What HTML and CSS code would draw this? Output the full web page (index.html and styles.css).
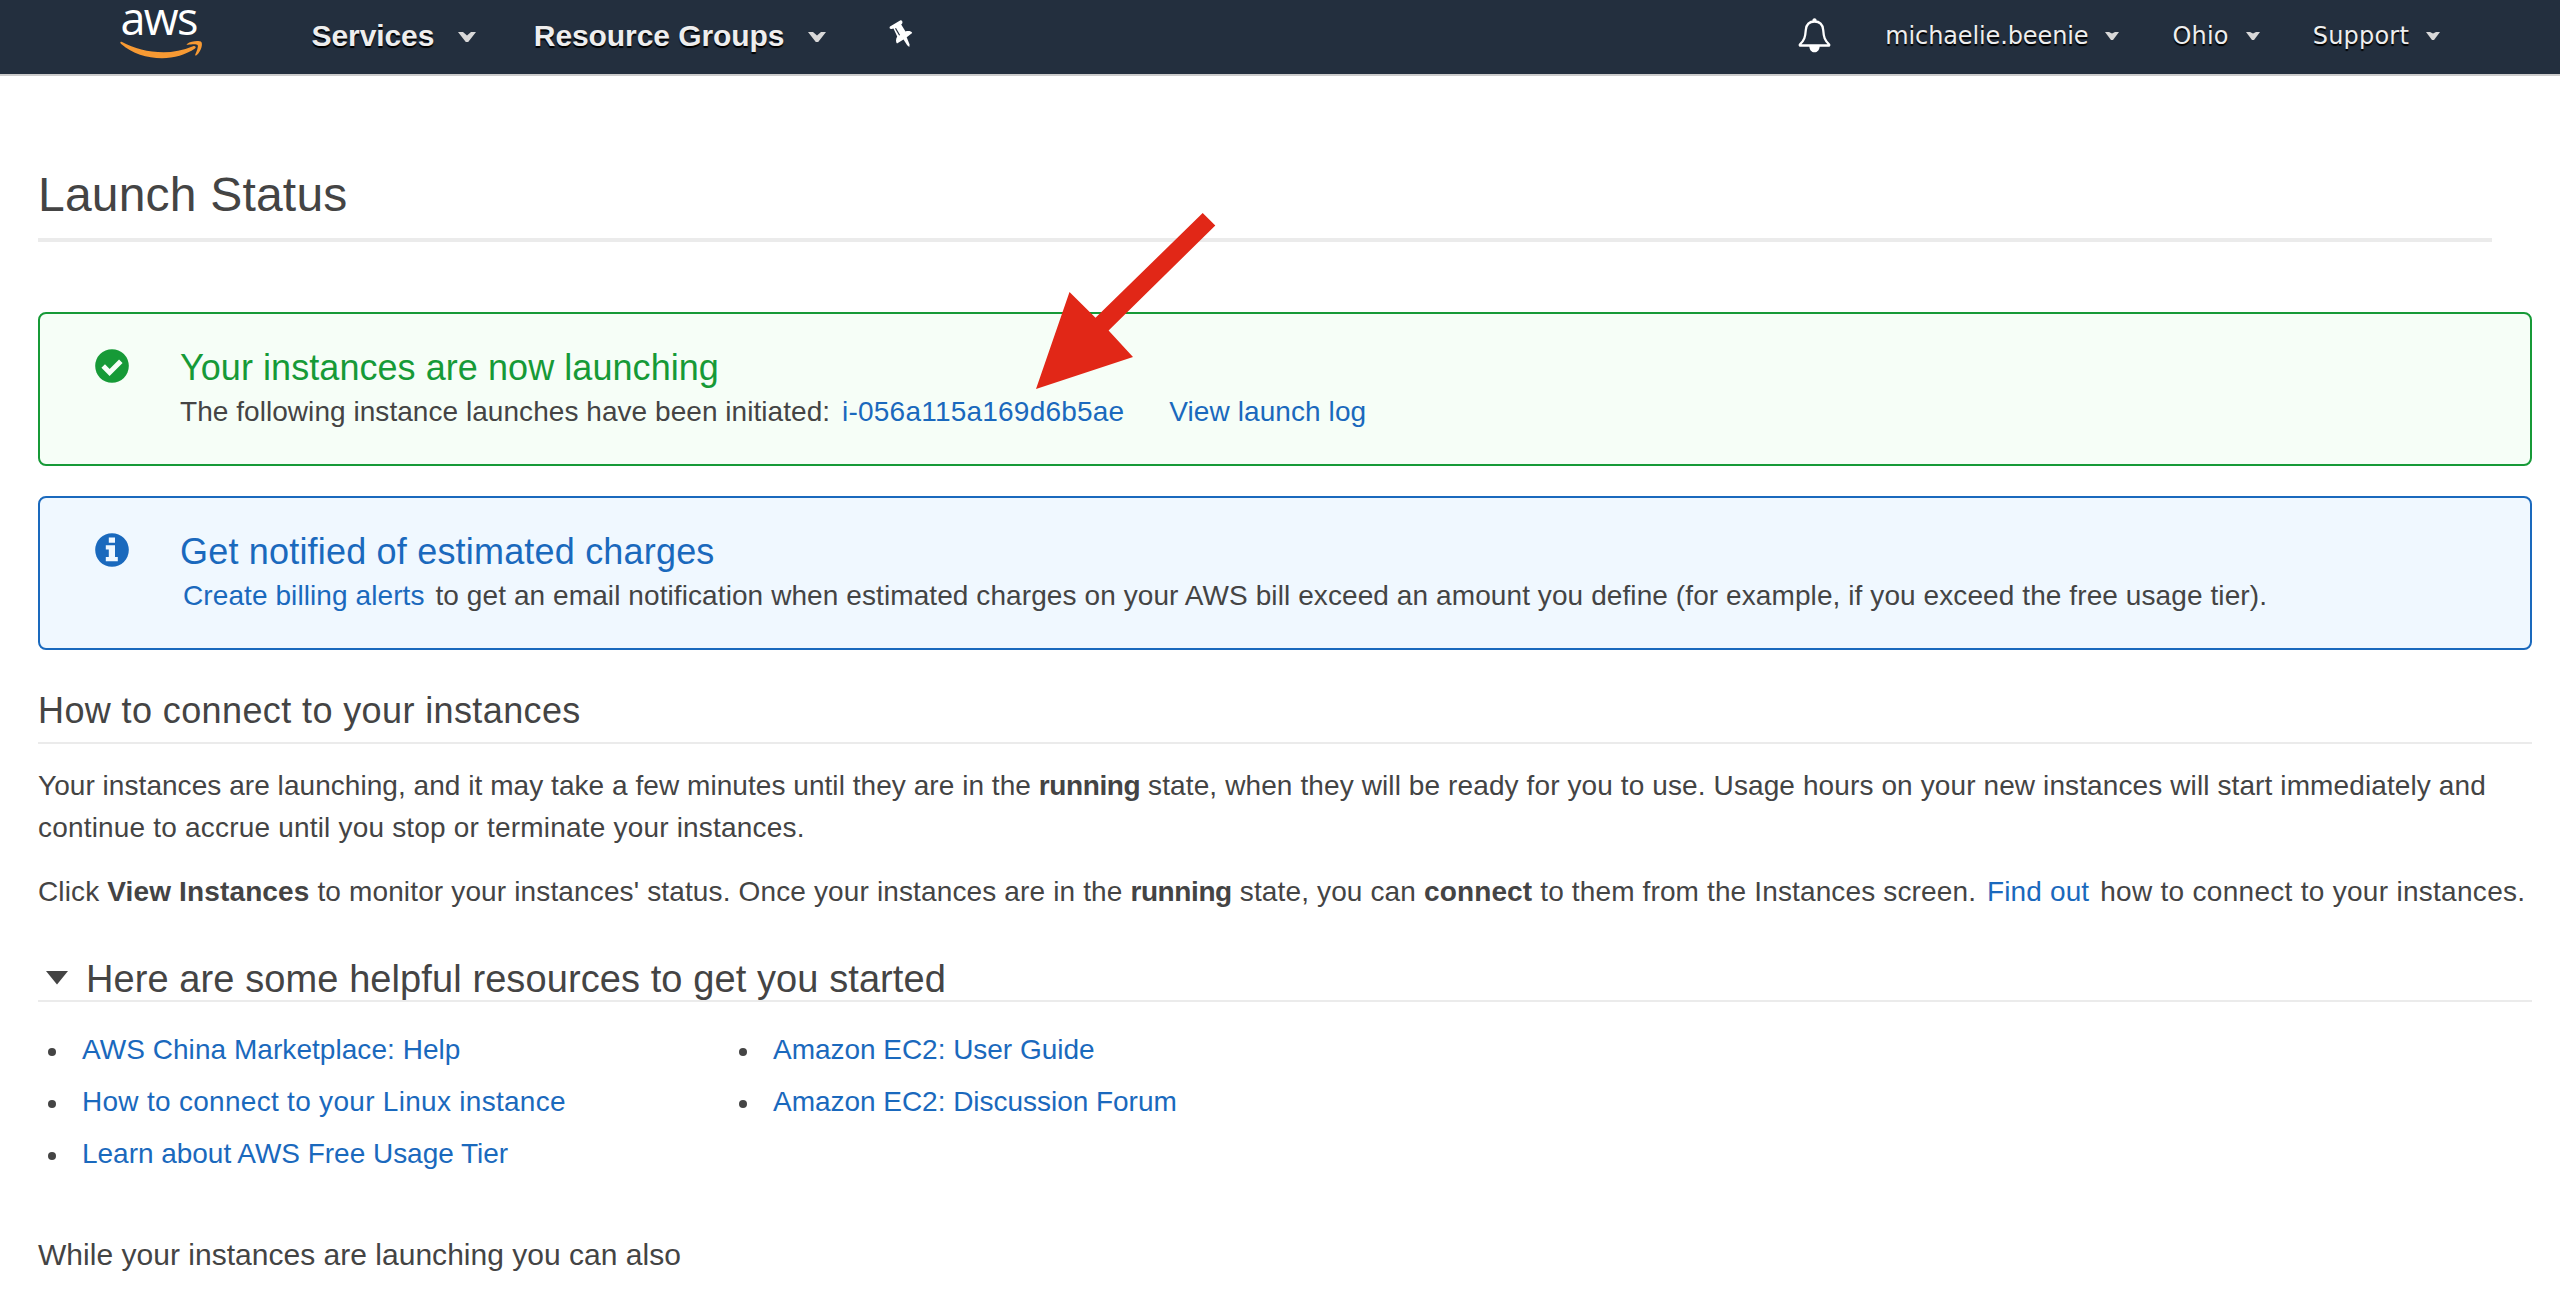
FILE: index.html
```
<!DOCTYPE html>
<html lang="en">
<head>
<meta charset="utf-8">
<title>Launch Status</title>
<link rel="stylesheet" href="styles.css">
</head>
<body>
<header class="nav">
  <svg class="logo" width="83" height="74" viewBox="0 0 83 74"><text class="logo-text" x="0.500" y="35">aws</text><g transform="translate(0 41)" fill="#f79a33"><path d="M0.500 1C0 1.700 0.600 2.500 1.500 3.300C12 12.500 27 17.300 42 17.300C54 17.300 66 13.500 75 7.500C76.700 6.300 75.200 4.300 73 5.200C63 9.300 53 11.300 43.500 11.300C28 11.300 14 7.500 2 1C1.400 0.600 0.900 0.500 0.500 1Z"/><path d="M67 2.900C71 0 78.500-0.600 81 0.700C83.300 2.200 81.200 10.500 76.500 14.200C75.600 15 74.800 14.600 75.300 13.500C76.600 10.500 78.600 5.400 77.600 4C76.500 2.700 71 3.400 68 3.700C66.600 3.900 66.300 3.400 67 2.900Z"/></g></svg>
  <a class="menu menu-main">Services<svg class="caret" width="18" height="10" viewBox="0 0 18 10"><path d="M0 0H5L9 3.500L13 0H18L10.200 10H7.800Z"/></svg></a>
  <a class="menu menu-main">Resource Groups<svg class="caret" width="18" height="10" viewBox="0 0 18 10"><path d="M0 0H5L9 3.500L13 0H18L10.200 10H7.800Z"/></svg></a>
  <svg class="pin" width="24" height="28" viewBox="0 0 24 28"><path fill="#fff" d="M1 6.500L11.500 0.200C13 0 14 2 13.200 3.500L12.200 4.500L16.500 11.500C19 10.500 22.500 11 23.200 13L17.700 17.200L20.600 24.500L20.300 27L18.200 25.200L14.500 19.500L8 23.600C6.700 22 6.600 19.500 8.200 16.600L4.500 8.600L2.500 9C0.800 9.200 0 7.700 1 6.500Z"/><path d="M6.500 8.200L10.600 15.200" stroke="#232f3e" stroke-width="1.200"/></svg>
  <div class="nav-right">
    <svg class="bell" width="33" height="35" viewBox="0 0 33 35"><path d="M16.500 3.500C10.500 3.500 8.200 7.500 7.800 12C7.300 19 6.300 22.500 1.800 26.500V27.500H31.200V26.500C26.700 22.500 25.700 19 25.200 12C24.800 7.500 22.500 3.500 16.500 3.500Z" fill="none" stroke="#fff" stroke-width="2.300" stroke-linejoin="round"/><path d="M14.500 3.500V1.500Q16.500-0.800 18.500 1.500V3.500ZM11.300 28H21.700C21.500 32 19.500 34.300 16.500 34.300C13.500 34.300 11.500 32 11.300 28Z" fill="#fff"/></svg>
    <a class="menu user">michaelie.beenie<svg class="caret" width="14" height="8" viewBox="0 0 14 8"><path d="M0 0H4L7 1.500L10 0H14L8 8H6Z"/></svg></a>
    <a class="menu">Ohio<svg class="caret" width="14" height="8" viewBox="0 0 14 8"><path d="M0 0H4L7 1.500L10 0H14L8 8H6Z"/></svg></a>
    <a class="menu">Support<svg class="caret" width="14" height="8" viewBox="0 0 14 8"><path d="M0 0H4L7 1.500L10 0H14L8 8H6Z"/></svg></a>
  </div>
</header>
<main>
  <h1>Launch Status</h1>
  <section class="alert success">
    <svg class="alert-icon" width="34" height="34" viewBox="0 0 34 34"><circle cx="17" cy="17" r="16.800" fill="#169a37"/><path d="M8.200 17L14.600 23.500L25.800 12.300" fill="none" stroke="#f6fef7" stroke-width="5"/></svg>
    <div>
      <h3>Your instances are now launching</h3>
      <p><span class="snug">The following instance launches have been initiated:</span> <a class="instance">i-056a115a169d6b5ae</a> <a class="log">View launch log</a></p>
    </div>
  </section>
  <section class="alert info">
    <svg class="alert-icon" width="34" height="34" viewBox="0 0 34 34"><circle cx="17" cy="17" r="16.800" fill="#1a69bd"/><path d="M13.800 4.500H20V9.800H13.800ZM10.800 12.300H20V24H22.800V28.300H10.800V24H13.800V16.600H10.800Z" fill="#f0f8ff"/></svg>
    <div>
      <h3>Get notified of estimated charges</h3>
      <p><a class="inline-link">Create billing alerts</a> to get an email notification when estimated charges on your AWS bill exceed an amount you define (for example, if you exceed the free usage tier).</p>
    </div>
  </section>
  <h2>How to connect to your instances</h2>
  <p class="body-text"><span class="snug">Your instances are launching, and it may take a few minutes until they are in the</span> <b class="state">running</b> <span class="wide">state, when they will be ready for you to use. Usage hours on your new instances will start immediately and</span><br><span class="wider">continue to accrue until you stop or terminate your instances.</span></p>
  <p class="body-text second">Click <b>View Instances</b> to monitor your instances' status. Once your instances are in the <b class="state">running</b> state, you can <b>connect</b> to them from the Instances screen. <a class="inline-link">Find out</a> <span class="widest">how to connect to your instances.</span></p>
  <h2 class="resources"><svg width="22" height="14" viewBox="0 0 22 14"><path d="M0 0H22L11 13.500Z" fill="#444"/></svg>Here are some helpful resources to get you started</h2>
  <div class="lists">
    <ul>
      <li><a class="snug">AWS China Marketplace: Help</a></li>
      <li><a class="widest">How to connect to your Linux instance</a></li>
      <li><a class="tight">Learn about AWS Free Usage Tier</a></li>
    </ul>
    <ul>
      <li><a class="tight">Amazon EC2: User Guide</a></li>
      <li><a class="tight">Amazon EC2: Discussion Forum</a></li>
    </ul>
  </div>
  <p class="also">While your instances are launching you can also</p>
</main>
<svg class="pointer" width="180" height="176" viewBox="0 0 180 176"><path d="M166.700 0L179.300 12.500L72.600 117.500L97 144L0 176L33.500 79L59.500 104.800Z" fill="#e12717"/></svg>
</body>
</html>
```
FILE: styles.css
```
* { box-sizing: border-box; }
body {
  margin: 0;
  height: 1310px;
  overflow: hidden;
  position: relative;
  background: #fff;
  color: #444;
  font: 28px/42px "Liberation Sans", Arial, sans-serif;
  letter-spacing: 0.090px;
}
h1, h2, h3, p, ul { margin: 0; padding: 0; font-weight: 400; }
a { color: #1a69bd; }

.nav {
  display: flex;
  height: 76px;
  padding-left: 120px;
  background: #232f3e;
  border-bottom: 2px solid #ccc;
}
.logo { margin-right: 108.500px; overflow: visible; }
.logo-text {
  fill: #fff;
  font: 500 45px "Open Sans", "Noto Sans", sans-serif;
  letter-spacing: -1.700px;
}
.menu {
  display: flex;
  color: #eee;
  font: 24px/73px "DejaVu Sans", Verdana, sans-serif;
  letter-spacing: 0.200px;
  text-shadow: 0 2px 1px #000;
}
.user { letter-spacing: -0.120px; }
.menu-main {
  font: 700 30px/71px "Liberation Sans", Arial, sans-serif;
  letter-spacing: -0.080px;
  margin-right: 57.500px;
}
.caret { margin: 32px 0 0 17px; fill: #d8d8d8; }
.menu-main .caret { margin-left: 24px; }
.pin { margin: 20px 0 0 5px; }
.nav-right { display: flex; margin-left: auto; padding-right: 120px; gap: 53px; }
.bell { margin: 18px 1px 0 0; }

main { padding: 91px 28px 0 38px; }
h1 {
  width: 2454px;
  padding-bottom: 15px;
  border-bottom: 4px solid #ebebeb;
  font-size: 48px;
  line-height: 56px;
  letter-spacing: 0.200px;
  margin-bottom: 70px;
}
.alert {
  display: flex;
  gap: 51px;
  height: 154px;
  padding: 32px 0 0 55px;
  border: 2px solid;
  border-radius: 8px;
}
.alert + .alert { margin-top: 30px; }
.alert-icon { margin-top: 3px; }
.success { border-color: #169a37; background: #f6fef7; }
.info { border-color: #1a69bd; background: #f0f8ff; }
h3 { font-size: 36px; line-height: 44px; margin-bottom: 1px; }
.success h3 { color: #169a37; letter-spacing: 0.060px; }
.info h3 { color: #1a69bd; letter-spacing: 0.190px; }

.instance { margin-left: 4px; letter-spacing: 0.220px; }
.log { margin-left: 37px; }
.inline-link { margin: 0 3px; }
.state { letter-spacing: -0.400px; }
.tight { letter-spacing: -0.030px; }
.snug { letter-spacing: 0.050px; }
.wide { letter-spacing: 0.110px; }
.wider { letter-spacing: 0.190px; }
.widest { letter-spacing: 0.290px; }

h2 {
  margin-top: 39px;
  padding-bottom: 9px;
  border-bottom: 2px solid #ebebeb;
  font-size: 36px;
  line-height: 44px;
  letter-spacing: 0.390px;
}
.body-text { margin-top: 21px; white-space: nowrap; }
.second { margin-top: 22px; letter-spacing: 0.140px; }
.resources {
  display: flex;
  gap: 18px;
  margin-top: 45px;
  padding: 0 0 0 8px;
  font-size: 38px;
  line-height: 42px;
  letter-spacing: 0.090px;
}
.resources svg { margin-top: 13px; }
.lists { display: flex; margin-top: 22px; height: 156px; }
ul { width: 691px; list-style: none; }
li { display: flex; align-items: center; height: 52px; }
li::before {
  content: "";
  width: 8px;
  height: 8px;
  margin: 3px 26px 0 10px;
  border-radius: 50%;
  background: #444;
}
.also { margin-top: 54px; font-size: 30px; letter-spacing: 0.020px; }

/* annotation lying over the heading and the alert */
.pointer { position: absolute; left: 1036px; top: 212.500px; }
```
